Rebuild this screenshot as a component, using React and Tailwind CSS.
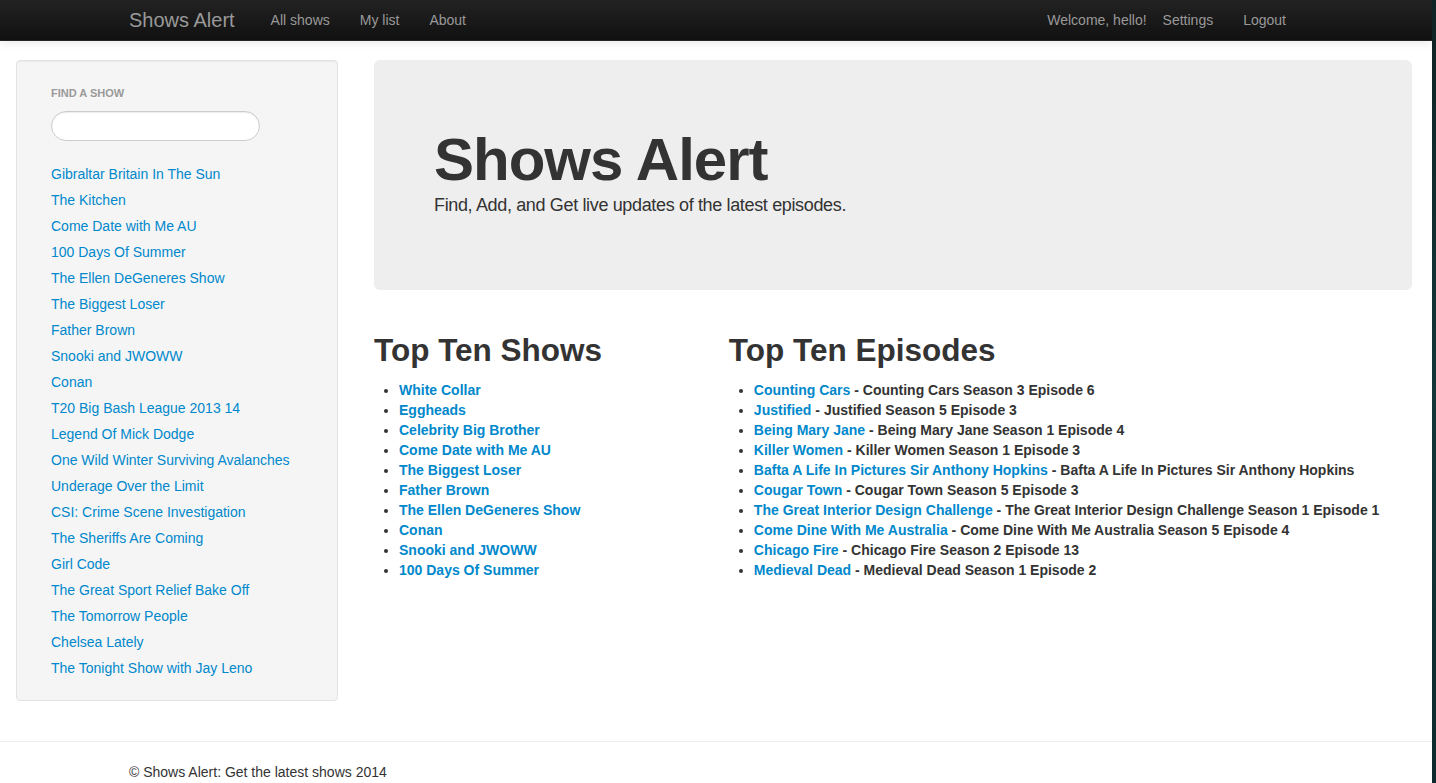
import React from "react";

const sidebarShows = [
  "Gibraltar Britain In The Sun",
  "The Kitchen",
  "Come Date with Me AU",
  "100 Days Of Summer",
  "The Ellen DeGeneres Show",
  "The Biggest Loser",
  "Father Brown",
  "Snooki and JWOWW",
  "Conan",
  "T20 Big Bash League 2013 14",
  "Legend Of Mick Dodge",
  "One Wild Winter Surviving Avalanches",
  "Underage Over the Limit",
  "CSI: Crime Scene Investigation",
  "The Sheriffs Are Coming",
  "Girl Code",
  "The Great Sport Relief Bake Off",
  "The Tomorrow People",
  "Chelsea Lately",
  "The Tonight Show with Jay Leno",
];

const topShows = [
  "White Collar",
  "Eggheads",
  "Celebrity Big Brother",
  "Come Date with Me AU",
  "The Biggest Loser",
  "Father Brown",
  "The Ellen DeGeneres Show",
  "Conan",
  "Snooki and JWOWW",
  "100 Days Of Summer",
];

const topEpisodes = [
  ["Counting Cars", "Counting Cars Season 3 Episode 6"],
  ["Justified", "Justified Season 5 Episode 3"],
  ["Being Mary Jane", "Being Mary Jane Season 1 Episode 4"],
  ["Killer Women", "Killer Women Season 1 Episode 3"],
  ["Bafta A Life In Pictures Sir Anthony Hopkins", "Bafta A Life In Pictures Sir Anthony Hopkins"],
  ["Cougar Town", "Cougar Town Season 5 Episode 3"],
  ["The Great Interior Design Challenge", "The Great Interior Design Challenge Season 1 Episode 1"],
  ["Come Dine With Me Australia", "Come Dine With Me Australia Season 5 Episode 4"],
  ["Chicago Fire", "Chicago Fire Season 2 Episode 13"],
  ["Medieval Dead", "Medieval Dead Season 1 Episode 2"],
];

export default function App() {
  return (
    <div
      className="flex min-h-[783px] w-[1436px] bg-white text-[#333333] text-[14px] leading-[20px]"
      style={{ fontFamily: '"Liberation Sans", Arial, sans-serif' }}
    >
      <div className="w-[1432px] flex flex-col">
        {/* Navbar */}
        <div className="h-[41px] bg-gradient-to-b from-[#222222] to-[#111111] border-b border-[#252525] shadow-[0_1px_10px_rgba(0,0,0,0.1)]">
          <div className="w-[1174px] mx-auto flex items-center h-[40px]">
            <span className="text-[20px] leading-[20px] text-[#999999]">Shows Alert</span>
            <div className="flex ml-[21px] text-[14px] text-[#999999]">
              <span className="px-[15px]">All shows</span>
              <span className="px-[15px]">My list</span>
              <span className="px-[15px]">About</span>
            </div>
            <div className="ml-auto mr-[2px] flex items-center text-[14px] text-[#999999]">
              <span className="mr-[1px]">Welcome, hello!</span>
              <span className="px-[15px]">Settings</span>
              <span className="px-[15px]">Logout</span>
            </div>
          </div>
        </div>

        {/* Main */}
        <div className="flex pl-[16px] pr-[20px] pt-[19px] gap-[36px] items-start">
          {/* Sidebar */}
          <div className="w-[322px] shrink-0 bg-[#f5f5f5] border border-[#e3e3e3] rounded-[4px] shadow-[inset_0_1px_1px_rgba(0,0,0,0.05)] py-[19px] pl-[34px]">
            <div className="pt-[3px] pb-[3px] text-[11px] leading-[20px] font-bold uppercase text-[#999999] [text-shadow:0_1px_0_rgba(255,255,255,0.5)]">
              Find a show
            </div>
            <div className="mt-[5px]">
              <div className="w-[209px] h-[30px] bg-white border border-[#cccccc] rounded-[15px] shadow-[inset_0_1px_1px_rgba(0,0,0,0.075)]" />
            </div>
            <div className="mt-[20px] flex flex-col">
              {sidebarShows.map((s) => (
                <span key={s} className="py-[3px] text-[#0088cc]">
                  {s}
                </span>
              ))}
            </div>
          </div>

          {/* Content */}
          <div className="flex-1 flex flex-col">
            <div className="bg-[#eeeeee] rounded-[6px] p-[60px]">
              <h1 className="mt-[10px] text-[60px] leading-[60px] font-bold tracking-[-1px] text-[#333333]">
                Shows Alert
              </h1>
              <p className="mb-[10px] text-[18px] leading-[30px] font-light tracking-[-0.35px] text-[#333333]">
                Find, Add, and Get live updates of the latest episodes.
              </p>
            </div>

            <div className="flex mt-[30px]">
              <div className="w-[31.6239%]">
                <h2 className="my-[10px] text-[31.5px] leading-[40px] font-bold text-[#333333]">Top Ten Shows</h2>
                <ul className="ml-[25px] list-disc font-bold">
                  {topShows.map((s) => (
                    <li key={s} className="text-[#333333]">
                      <span className="text-[#0088cc]">{s}</span>
                    </li>
                  ))}
                </ul>
              </div>
              <div className="ml-[2.5641%] flex-1">
                <h2 className="my-[10px] text-[31.5px] leading-[40px] font-bold text-[#333333]">Top Ten Episodes</h2>
                <ul className="ml-[25px] list-disc font-bold">
                  {topEpisodes.map(([a, b]) => (
                    <li key={a} className="text-[#333333]">
                      <span className="text-[#0088cc]">{a}</span> - {b}
                    </li>
                  ))}
                </ul>
              </div>
            </div>
          </div>
        </div>

        {/* Footer */}
        <div className="mt-[40px] border-t border-[#eeeeee]">
          <div className="w-[1174px] mx-auto pt-[20px]">
            <p className="text-[14px] leading-[20px] text-[#333333]">© Shows Alert: Get the latest shows 2014</p>
          </div>
        </div>
      </div>
      <div className="flex-1 bg-gradient-to-b from-[#0f2324] via-[#143638] to-[#0e2a2c]" />
    </div>
  );
}
